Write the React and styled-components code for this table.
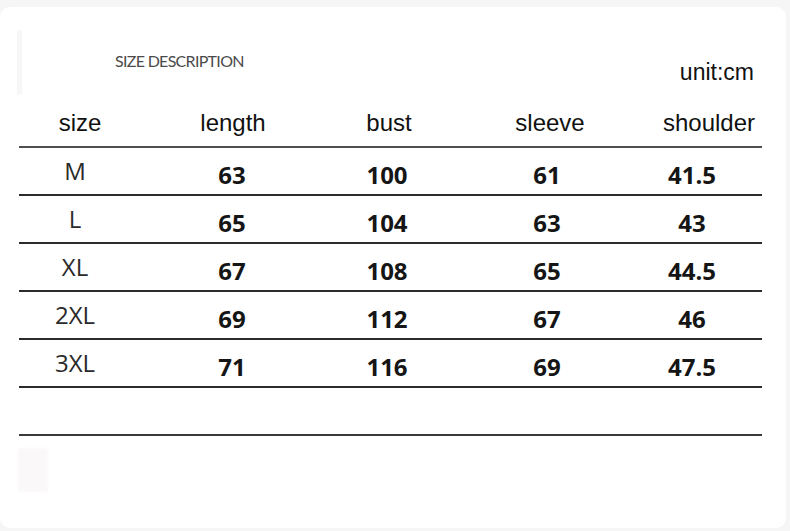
import React from "react";
import styled, { createGlobalStyle } from "styled-components";

const GlobalStyle = createGlobalStyle`
  html, body {
    margin: 0;
    padding: 0;
    background: #f6f6f6;
  }
  body {
    width: 790px;
    height: 531px;
    overflow: hidden;
  }
`;

const Card = styled.div`
  margin-top: 7px;
  margin-right: 4px;
  height: 521px;
  background: #ffffff;
  border-radius: 10px;
  padding-left: 19px;
  box-sizing: border-box;
`;

const Sheet = styled.div`
  width: 743px;
`;

const TopArea = styled.div`
  height: 93px;
  display: flex;
  align-items: flex-start;
`;

const Smudge = styled.div`
  width: 5px;
  height: 65px;
  margin-top: 23px;
  margin-left: -2px;
  background: #f7f7f7;
  border-radius: 2px;
`;

const Title = styled.div`
  margin-top: 44px;
  margin-left: 93px;
  font-family: Lato, "Open Sans", sans-serif;
  font-size: 16px;
  line-height: 19px;
  letter-spacing: -0.7px;
  color: #4a4a4a;
`;

const Unit = styled.div`
  margin-top: 52px;
  margin-left: auto;
  margin-right: 8px;
  font-family: "Liberation Sans", Arial, sans-serif;
  font-size: 23px;
  line-height: 26px;
  color: #111;
`;

const headCols = "122px 184px 128px 194px 124px";
const bodyCols = "112px 202px 108px 212px 78px";

const Row = styled.div`
  display: grid;
  grid-template-columns: ${p => p.$cols};
  height: ${p => p.$height}px;
  border-bottom: 2px solid ${p => p.$line};
  align-items: ${p => (p.$head ? "end" : "start")};
  padding-bottom: ${p => (p.$head ? 9 : 0)}px;
  box-sizing: ${p => (p.$head ? "border-box" : "content-box")};
`;

const HeadCell = styled.div`
  text-align: center;
  white-space: nowrap;
  font-family: "Liberation Sans", Arial, sans-serif;
  font-size: 24px;
  line-height: 28px;
  color: #111;
`;

const SizeCell = styled.div`
  text-align: center;
  white-space: nowrap;
  font-family: "Open Sans", "Noto Sans", sans-serif;
  font-weight: 400;
  font-size: 24px;
  line-height: 46px;
  color: #2a2a2a;
`;

const NumCell = styled.div`
  text-align: center;
  white-space: nowrap;
  font-family: "Open Sans", "Noto Sans", sans-serif;
  font-weight: 700;
  font-size: 24px;
  line-height: 46px;
  padding-top: 4px;
  color: #151515;
`;

const Blush = styled.div`
  width: 30px;
  height: 44px;
  margin-top: 12px;
  margin-left: -1px;
  background: #fbf8fa;
  border-radius: 3px;
  filter: blur(1px);
`;

const headers = ["size", "length", "bust", "sleeve", "shoulder"];

const rows = [
  ["M", "63", "100", "61", "41.5"],
  ["L", "65", "104", "63", "43"],
  ["XL", "67", "108", "65", "44.5"],
  ["2XL", "69", "112", "67", "46"],
  ["3XL", "71", "116", "69", "47.5"],
];

export default function App() {
  return (
    <>
      <GlobalStyle />
      <Card>
        <Sheet>
          <TopArea>
            <Smudge />
            <Title>SIZE DESCRIPTION</Title>
            <Unit>unit:cm</Unit>
          </TopArea>
          <Row $head $cols={headCols} $height={48} $line="#4f4f4f">
            {headers.map(h => (
              <HeadCell key={h}>{h}</HeadCell>
            ))}
          </Row>
          {rows.map(([size, ...nums]) => (
            <Row key={size} $cols={bodyCols} $height={46} $line="#2b2b2b">
              <SizeCell>{size}</SizeCell>
              {nums.map((n, i) => (
                <NumCell key={i}>{n}</NumCell>
              ))}
            </Row>
          ))}
          <Row $cols={bodyCols} $height={46} $line="#3a3a3a" />
          <Blush />
        </Sheet>
      </Card>
    </>
  );
}
